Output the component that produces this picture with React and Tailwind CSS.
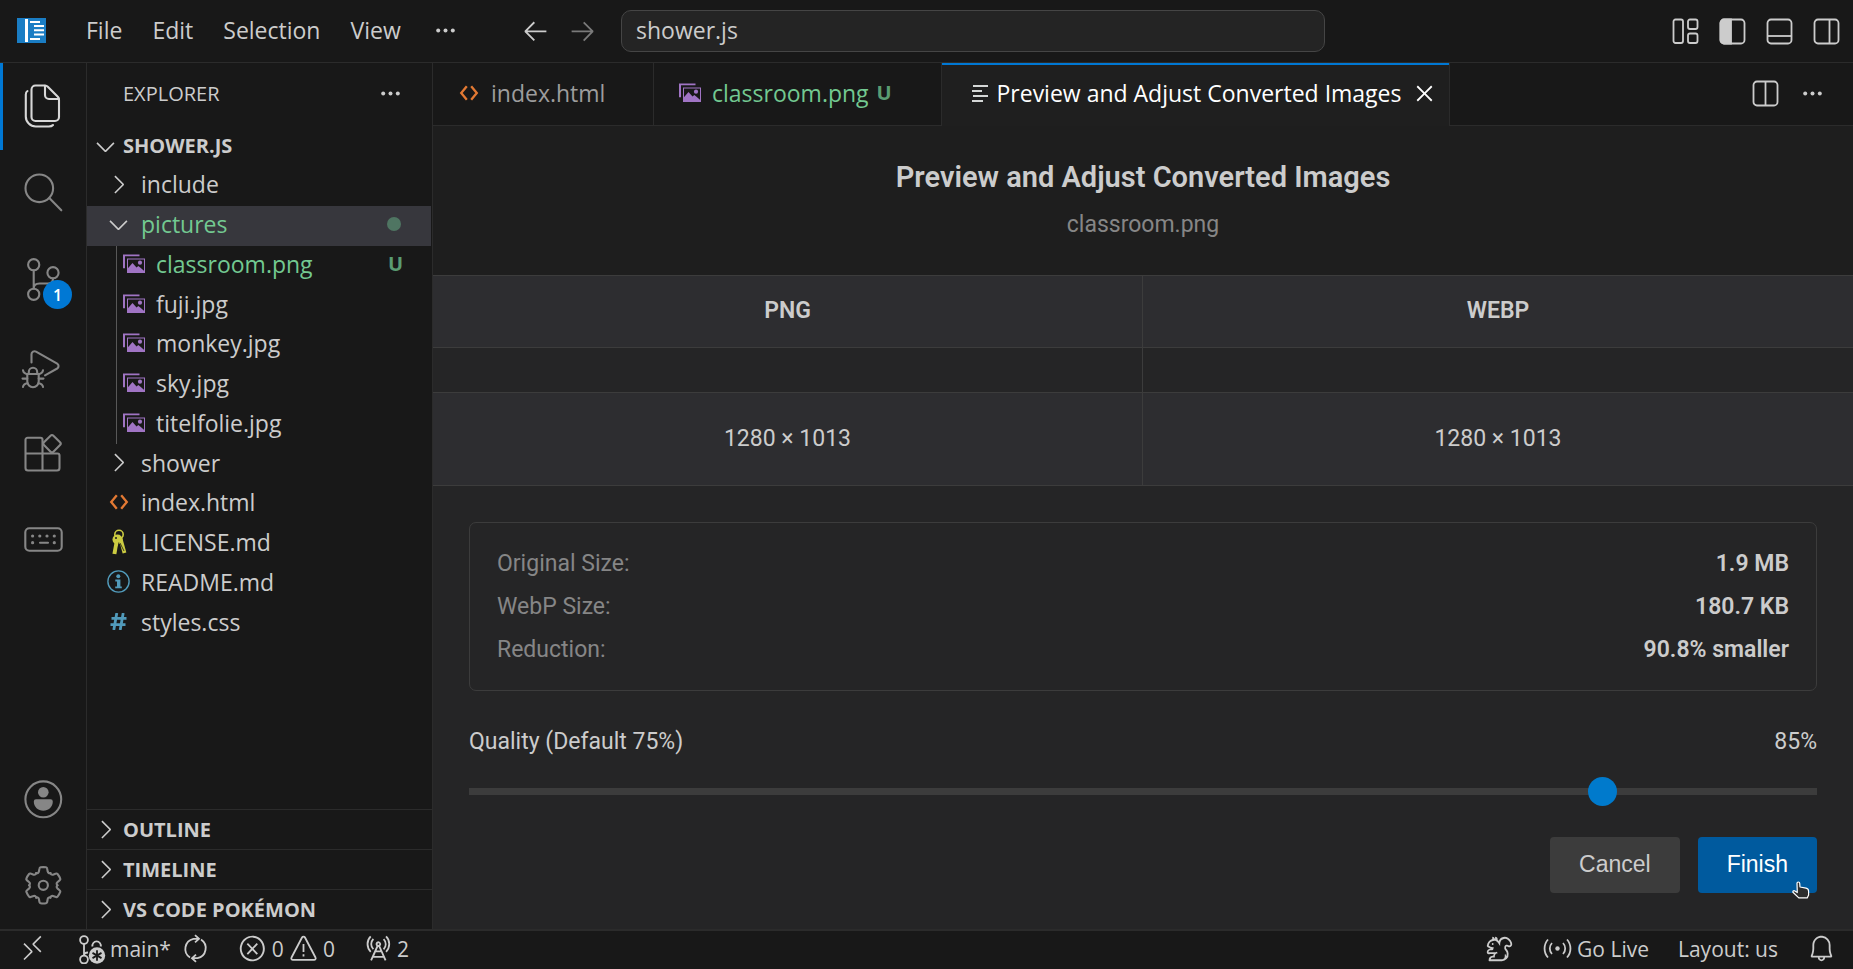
import React, { useState } from 'react';
import {
  VscArrowLeft,
  VscArrowRight,
  VscBell,
  VscChevronDown,
  VscChevronRight,
  VscClose,
  VscError,
  VscRadioTower,
  VscRemote,
  VscSquirrel,
} from 'react-icons/vsc';

/* ---------- Icons ---------- */

const ActivitySvg = ({ children }) => (
  <svg
    viewBox="0 0 44 45"
    className="w-[44px] h-[45px]"
    fill="none"
    stroke="currentColor"
    strokeWidth="2.1"
    strokeLinecap="round"
    strokeLinejoin="round"
  >
    {children}
  </svg>
);

const FilesIcon = () => (
  <ActivitySvg>
    <path d="M14.5 1.5H24a4 4 0 0 1 2.8 1.2l10 10A4 4 0 0 1 38 15.5V33a4 4 0 0 1-4 4H14.5a4 4 0 0 1-4-4V5.5a4 4 0 0 1 4-4Z" />
    <path d="M24 1.8V11a4 4 0 0 0 4 4h9.8" />
    <path d="M6.500 7C5.300 7.800 4.800 9 4.800 10.500v22a10 10 0 0 0 10 10h13c2 0 3.200-.4 4.200-1.500" />
  </ActivitySvg>
);

const SearchIcon = () => (
  <ActivitySvg>
    <circle cx="18.3" cy="17.3" r="13.8" />
    <path d="M28.3 27 40.3 39.3" />
  </ActivitySvg>
);

const SourceControlIcon = () => (
  <ActivitySvg>
    <circle cx="12.7" cy="6.7" r="5.6" />
    <circle cx="32" cy="14.7" r="5.6" />
    <circle cx="12.7" cy="36.3" r="5.6" />
    <path d="M12.7 12.5v18M32 20.5c0 3.5-1.8 5-5 5h-8.5c-3.8 0-5.8 2-5.8 5" />
  </ActivitySvg>
);

const DebugIcon = () => (
  <ActivitySvg>
    <path d="M10.5 17.5V9.3a3 3 0 0 1 4.5-2.6l21.2 12a2.8 2.8 0 0 1 0 4.800L24 30.300" />
    <path d="M6.3 29h11.4v7.5a5.7 5.7 0 0 1-11.4 0ZM7.8 29v-2a4.2 4.2 0 0 1 8.4 0v2" />
    <path d="M2 25.2c.3 2.2 1.6 3.6 4.3 4M22 25.2c-.3 2.2-1.6 3.6-4.3 4M1.5 33.6h4.8M17.7 33.6h4.8M2 42c.2-2 1.8-3.4 4.6-3.8M22 42c-.2-2-1.8-3.4-4.6-3.8" />
  </ActivitySvg>
);

const ExtensionsIcon = () => (
  <ActivitySvg>
    <path d="M21.5 21.5V7.8a2 2 0 0 0-2-2H6.5a2 2 0 0 0-2 2V36A2.5 2.5 0 0 0 7 38.5h29a2.5 2.5 0 0 0 2.5-2.5V23.5a2 2 0 0 0-2-2h-32M21.5 21.5v17" />
    <rect x="24.3" y="5" width="13.4" height="13.4" rx="2" transform="rotate(45 31 11.7)" />
  </ActivitySvg>
);

const KeyboardIcon = () => (
  <ActivitySvg>
    <rect x="4.3" y="9.3" width="36.4" height="22.4" rx="4" />
    <path d="M19 23.7h8" />
    <g fill="currentColor" stroke="none">
      <circle cx="11.6" cy="17" r="1.6" />
      <circle cx="18.8" cy="17" r="1.6" />
      <circle cx="26" cy="17" r="1.6" />
      <circle cx="33.3" cy="17" r="1.6" />
      <circle cx="11.6" cy="23.7" r="1.6" />
      <circle cx="33.3" cy="23.7" r="1.6" />
    </g>
  </ActivitySvg>
);

const AccountIcon = () => (
  <ActivitySvg>
    <circle cx="22.3" cy="23.3" r="17.9" />
    <g fill="currentColor" stroke="none">
      <circle cx="22.3" cy="16.3" r="5.3" />
      <path d="M15 23.3h14.6a2.2 2.2 0 0 1 2.2 2.2c0 5.5-4.3 9.3-9.5 9.3s-9.5-3.8-9.5-9.3a2.2 2.2 0 0 1 2.2-2.2Z" />
    </g>
  </ActivitySvg>
);

const GearIcon = () => (
  <ActivitySvg>
    <circle cx="22.3" cy="22.3" r="4.6" />
    {/* one tooth, repeated every 60 degrees */}
    {[0, 60, 120, 180, 240, 300].map((deg) => (
      <path
        key={deg}
        transform={`rotate(${deg} 22.3 22.3)`}
        d="M15.2 10c1.3.5 2.4-.1 2.700-1.400l.6-3.200c.1-.7.5-1 1.100-1.100 1.800-.3 3.600-.3 5.400 0 .6.1 1 .4 1.100 1.100l.6 3.200c.3 1.300 1.400 1.900 2.700 1.400"
      />
    ))}
  </ActivitySvg>
);

const CodeSvg = ({ children }) => (
  <svg viewBox="0 0 29 29" className="w-[29px] h-[29px] shrink-0" fill="none" stroke="currentColor" strokeWidth="1.8">
    {children}
  </svg>
);

const EllipsisIcon = () => (
  <CodeSvg>
    <g fill="currentColor" stroke="none">
      <circle cx="7.2" cy="14.5" r="2" />
      <circle cx="14.5" cy="14.5" r="2" />
      <circle cx="21.8" cy="14.5" r="2" />
    </g>
  </CodeSvg>
);

const CustomizeLayoutIcon = () => (
  <CodeSvg>
    <rect x="2.5" y="2.5" width="9.5" height="23.5" rx="2" />
    <rect x="17" y="2.5" width="9.5" height="9.5" rx="2" />
    <rect x="17" y="16.5" width="9.5" height="9.5" rx="2" />
  </CodeSvg>
);

const PanelIcon = ({ side }) => (
  <CodeSvg>
    <rect x="2.5" y="2.5" width="24" height="24" rx="3.5" />
    {side === 'left' && <path d="M6 2.5h7v24H6A3.5 3.5 0 0 1 2.5 23V6A3.5 3.5 0 0 1 6 2.5Z" fill="currentColor" />}
    {side === 'bottom' && <path d="M2.5 19h24" />}
    {side === 'right' && <path d="M17.5 2.5v24" />}
    {side === 'middle' && <path d="M14.5 2.5v24" />}
  </CodeSvg>
);

const HtmlIcon = () => (
  <svg viewBox="0 0 20 16" className="w-[20px] h-[16px] text-[#e37933]" fill="none" stroke="currentColor" strokeWidth="2.3">
    <path d="M7.8 1.2 2.2 8l5.6 6.8M12.2 1.2 17.8 8l-5.6 6.8" />
  </svg>
);

const ImageIcon = () => (
  <svg viewBox="0 0 22 20" className="w-[22px] h-[20px] shrink-0 text-[#a074c4]" fill="currentColor">
    <path d="M0 .5h16.5v1.7H2v12H0Z" />
    <path fillRule="evenodd" d="M4 4.5h18V19H4Zm1 1V18h16V5.500Z" />
    <circle cx="17" cy="8.7" r="2.1" />
    <path d="M4.5 18.5v-3.800l5-5.700 4 4.500 1.800-1.500 2.200 1.800 4 3.500v1.200Z" />
  </svg>
);

const KeysIcon = () => (
  <svg viewBox="0 0 16 27" className="w-[16px] h-[27px] text-[#cbcb41]" fill="none" stroke="currentColor">
    <circle cx="8" cy="5.5" r="4.2" strokeWidth="1.6" />
    <circle cx="6.5" cy="10.5" r="5" fill="currentColor" stroke="none" />
    <path d="M6 11 3.400 25" strokeWidth="4" />
    <path d="M9.500 9.500 13.500 24" strokeWidth="3.8" />
    <path d="M7.800 13.500 6.600 25M9 14l4 8" stroke="#181818" strokeWidth=".8" />
    <circle cx="5" cy="9" r="1" fill="#181818" stroke="none" />
  </svg>
);

const InfoIcon = () => (
  <svg viewBox="0 0 23 23" className="w-[23px] h-[23px] text-[#519aba]" fill="none" stroke="currentColor">
    <circle cx="11.5" cy="11.5" r="10.6" strokeWidth="1.4" />
    <circle cx="11.3" cy="6.3" r="2" fill="currentColor" stroke="none" />
    <path d="M8.3 10.500h4.200v6.800M8.200 17.300h6.600" strokeWidth="1.8" />
    <path d="M11.500 10v7.500" strokeWidth="3" />
  </svg>
);

const HashIcon = () => (
  <svg viewBox="0 0 17 17" className="w-[17px] h-[17px] text-[#519aba]" fill="none" stroke="currentColor" strokeWidth="2.8">
    <path d="M6.8 0 3.800 17M13.200 0l-3 17M1.500 5.300h15M.5 11.700h15" />
  </svg>
);

const LinesIcon = () => (
  <svg viewBox="0 0 16 18" className="w-[16px] h-[18px] shrink-0 text-[#d4d7d6]" stroke="currentColor" strokeWidth="2">
    <path d="M1 2h15M0 7h10M1 12h15M0 17h11" />
  </svg>
);

const BranchIcon = () => (
  <svg viewBox="0 0 28 30" className="w-[28px] h-[30px]" fill="none" stroke="currentColor" strokeWidth="1.8">
    <circle cx="6" cy="6" r="3.9" />
    <circle cx="6" cy="25.5" r="3.9" />
    <path d="M6 10v11.500M14.500 12.500a4.200 4.200 0 1 1 8.200 0M6 21.500c0-2 1.500-3 4-3" />
    <circle cx="19" cy="21.500" r="8.2" fill="currentColor" stroke="none" />
    <path d="M19 16.300v10.400M14.500 18.900l9 5.200M23.500 18.900l-9 5.200" stroke="#181818" />
  </svg>
);

const SyncIcon = () => (
  <CodeSvg>
    <path id="sync-half" d="M9 23.500A10.300 10.300 0 0 1 12.500 4.800H18M14 1.200l4 3.600-4 3.600" />
    <path d="M9 23.500A10.300 10.300 0 0 1 12.500 4.800H18M14 1.200l4 3.600-4 3.600" transform="rotate(180 14.500 14.500)" />
  </CodeSvg>
);

const WarningIcon = () => (
  <CodeSvg>
    <path d="M13 3.500a1.700 1.700 0 0 1 3 0l10.500 20a1.600 1.600 0 0 1-1.400 2.400H3.900a1.600 1.600 0 0 1-1.400-2.400Z" strokeLinejoin="round" />
    <path d="M14.500 10v8M14.500 20.300v2.200" />
  </CodeSvg>
);

const BroadcastIcon = () => (
  <CodeSvg>
    <circle cx="14.5" cy="14.5" r="2.2" fill="currentColor" stroke="none" />
    <path d="M9 9a8 8 0 0 0 0 11M20 9a8 8 0 0 1 0 11M5 5.500a13.500 13.500 0 0 0 0 18M24 5.500a13.500 13.500 0 0 1 0 18" />
  </CodeSvg>
);

const AppLogo = () => (
  <svg viewBox="0 0 29 25" className="w-[29px] h-[25px] shrink-0">
    <path fill="#1a7dc4" d="M0 0h29v25H0Z" />
    <path stroke="#fff" strokeWidth="3" d="M9.500 1v23" />
    <path stroke="#fff" strokeWidth="2" d="M13 4h10M17 8h10M17 12.300h10M17 16.500h10M13 21h10" />
  </svg>
);

const HandCursor = () => (
  <svg viewBox="0 0 18 18" className="absolute w-[18px] h-[18px] right-[7px] -bottom-[6px]">
    <path
      d="M5 2.200C5 .6 7.600.6 7.700 2.200L8 6l6 1.200c1.800.4 2.600 1.300 2.600 3V14l-1.400 2.900H6.800L1.200 11.500c-1-1 .5-2.400 1.700-1.600L5.300 11.500Z"
      fill="#2d2d2d"
      stroke="#fff"
      strokeWidth="1.2"
      strokeLinejoin="round"
    />
  </svg>
);

/* ---------- Data ---------- */

const TREE = [
  { name: 'include', kind: 'folder' },
  { name: 'pictures', kind: 'folder', open: true },
  { name: 'classroom.png', kind: 'image', badge: 'U' },
  { name: 'fuji.jpg', kind: 'image' },
  { name: 'monkey.jpg', kind: 'image' },
  { name: 'sky.jpg', kind: 'image' },
  { name: 'titelfolie.jpg', kind: 'image' },
  { name: 'shower', kind: 'folder' },
  { name: 'index.html', kind: 'file', icon: <HtmlIcon /> },
  { name: 'LICENSE.md', kind: 'file', icon: <KeysIcon /> },
  { name: 'README.md', kind: 'file', icon: <InfoIcon /> },
  { name: 'styles.css', kind: 'file', icon: <HashIcon /> },
];

const ACTIVITIES = [
  { label: 'Explorer', icon: <FilesIcon />, active: true },
  { label: 'Search', icon: <SearchIcon /> },
  { label: 'Source Control', icon: <SourceControlIcon />, badge: 1 },
  { label: 'Run and Debug', icon: <DebugIcon /> },
  { label: 'Extensions', icon: <ExtensionsIcon /> },
  { label: 'Keyboard', icon: <KeyboardIcon /> },
];

const STATS = [
  ['Original Size:', '1.9 MB'],
  ['WebP Size:', '180.7 KB'],
  ['Reduction:', '90.8% smaller'],
];

/* ---------- Layout parts ---------- */

const TitleBar = () => (
  <header className="h-[63px] shrink-0 flex items-center border-b border-[#2b2b2b]">
    <div className="w-[621px] shrink-0 flex items-center justify-between pl-[17px] pr-[24px] pb-[2px]">
      <div className="flex items-center">
        <AppLogo />
        <nav className="flex items-center gap-[30px] ml-[40px]">
          {['File', 'Edit', 'Selection', 'View'].map((m) => (
            <button key={m}>{m}</button>
          ))}
          <button aria-label="More"><EllipsisIcon /></button>
        </nav>
      </div>
      <div className="flex gap-[18px]">
        <button aria-label="Back"><VscArrowLeft size={29} /></button>
        <button aria-label="Forward" className="text-[#7a7a7a]"><VscArrowRight size={29} /></button>
      </div>
    </div>
    <input
      aria-label="Command Center"
      readOnly
      value="shower.js"
      className="w-[38%] h-[42px] rounded-[10px] border border-[#454545] bg-[#242424] px-[14px] pb-[2px] outline-none"
    />
    <div className="ml-auto flex gap-[18px] pr-3">
      <button aria-label="Customize Layout"><CustomizeLayoutIcon /></button>
      <button aria-label="Toggle Primary Side Bar"><PanelIcon side="left" /></button>
      <button aria-label="Toggle Panel"><PanelIcon side="bottom" /></button>
      <button aria-label="Toggle Secondary Side Bar"><PanelIcon side="right" /></button>
    </div>
  </header>
);

const ActivityButton = ({ label, icon, active, badge }) => (
  <button
    aria-label={label}
    className={`relative h-[87px] flex items-center justify-center ${active ? 'text-[#d7d7d7]' : 'text-[#868686]'}`}
  >
    {active && <span className="absolute left-0 inset-y-0 w-[3px] bg-[#0078d4]" />}
    {icon}
    {badge && (
      <span className="absolute right-[14px] bottom-[15px] w-[29px] h-[29px] rounded-full bg-[#0078d4] text-white text-base font-semibold flex items-center justify-center">
        {badge}
      </span>
    )}
  </button>
);

const ActivityBar = () => (
  <aside className="w-[87px] shrink-0 flex flex-col justify-between border-r border-[#2b2b2b]">
    <div className="flex flex-col">
      {ACTIVITIES.map((a) => <ActivityButton key={a.label} {...a} />)}
    </div>
    <div className="flex flex-col">
      <ActivityButton label="Accounts" icon={<AccountIcon />} />
      <ActivityButton label="Manage" icon={<GearIcon />} />
    </div>
  </aside>
);

const TreeRow = ({ name, kind, open, icon, badge }) => {
  if (kind === 'image') {
    return (
      <li className="ml-[29px] pl-[6px] pr-[29px] pb-[3px] border-l border-[#585858] flex items-center">
        <ImageIcon />
        <span className={`ml-[11px] ${badge ? 'text-[#73c991]' : ''}`}>{name}</span>
        {badge && <span className="ml-auto text-xl font-bold text-[#5a9c72]">{badge}</span>}
      </li>
    );
  }
  return (
    <li className={`pl-[17px] pr-[30px] pb-[3px] mr-px flex items-center ${open ? 'bg-[#37373d] text-[#73c991]' : ''}`}>
      <span className="w-[29px] flex justify-center text-[#cccccc]">
        {kind === 'folder' ? (open ? <VscChevronDown size={29} /> : <VscChevronRight size={29} />) : icon}
      </span>
      <span className="ml-[8px]">{name}</span>
      {open && <span className="ml-auto w-[14px] h-[14px] rounded-full bg-[#4f7562]" />}
    </li>
  );
};

const Sidebar = () => (
  <aside className="w-[346px] shrink-0 flex flex-col border-r border-[#2b2b2b]">
    <div className="h-[63px] flex items-center justify-between pl-[36px] pr-[27px] pb-[2px]">
      <h2 className="text-xl">EXPLORER</h2>
      <button aria-label="Views and More Actions"><EllipsisIcon /></button>
    </div>
    <div className="h-[40px] flex items-center pl-[4px]">
      <VscChevronDown size={29} />
      <h3 className="ml-[3px] text-xl font-bold">SHOWER.JS</h3>
    </div>
    <ul className="h-[477px] grid auto-rows-fr">
      {TREE.map((item) => <TreeRow key={item.name} {...item} />)}
    </ul>
    <div className="mt-auto">
      {['OUTLINE', 'TIMELINE', 'VS CODE POKÉMON'].map((s) => (
        <button key={s} className="w-full h-[40px] flex items-center pl-[4px] border-t border-[#2b2b2b] text-xl font-bold">
          <VscChevronRight size={29} />
          <span className="ml-[3px]">{s}</span>
        </button>
      ))}
    </div>
  </aside>
);

const Tabs = () => (
  <div className="h-[63px] flex shrink-0 bg-[#181818]">
    <div className="w-[221px] flex items-center pl-[26px] pb-[2px] border-r border-b border-[#2b2b2b] text-[#9d9d9d]">
      <HtmlIcon />
      <span className="ml-[12px]">index.html</span>
    </div>
    <div className="w-[288px] flex items-center pl-[25px] pb-[2px] border-r border-b border-[#2b2b2b] text-[#73c991]">
      <ImageIcon />
      <span className="ml-[11px]">classroom.png</span>
      <span className="ml-[8px] text-xl font-bold text-[#5a9c72]">U</span>
    </div>
    <div className="relative w-[508px] flex items-center justify-between pl-[30px] pr-[10px] pb-[3px] border-r border-[#2b2b2b] bg-[#1f1f1f] text-white">
      <span className="absolute top-0 inset-x-0 h-[2px] bg-[#0078d4]" />
      <LinesIcon />
      <span className="whitespace-nowrap">Preview and Adjust Converted Images</span>
      <button aria-label="Close"><VscClose size={29} /></button>
    </div>
    <div className="flex-1 flex items-center justify-end gap-[18px] pr-[26px] pb-[2px] border-b border-[#2b2b2b]">
      <button aria-label="Split Editor"><PanelIcon side="middle" /></button>
      <button aria-label="More Actions"><EllipsisIcon /></button>
    </div>
  </div>
);

const Preview = () => {
  const [quality, setQuality] = useState(85);

  return (
    <section className="flex-1 flex flex-col bg-[#252526] font-['Roboto',sans-serif] leading-[43px]">
      <div className="h-[150px] shrink-0 flex flex-col items-center pt-[30px] bg-[#1e1e1e] border-b border-[#3c3c3c]">
        <h1 className="text-[29px] font-semibold">Preview and Adjust Converted Images</h1>
        <p className="mt-[4px] text-[#868686]">classroom.png</p>
      </div>

      <table className="w-full table-fixed border-separate border-spacing-0 text-center">
        <thead>
          <tr>
            <th className="h-[72px] p-0 pb-[2px] bg-[#2d2d30] border-b border-r border-[#3c3c3c] font-semibold">PNG</th>
            <th className="h-[72px] p-0 pb-[2px] bg-[#2d2d30] border-b border-[#3c3c3c] font-semibold">WEBP</th>
          </tr>
        </thead>
        <tbody>
          <tr>
            <td className="h-[45px] p-0 border-b border-r border-[#3c3c3c]"></td>
            <td className="h-[45px] p-0 border-b border-[#3c3c3c]"></td>
          </tr>
          <tr>
            <td className="h-[93px] p-0 pb-[2px] bg-[#2d2d30] border-b border-r border-[#3c3c3c]">1280 × 1013</td>
            <td className="h-[93px] p-0 pb-[2px] bg-[#2d2d30] border-b border-[#3c3c3c]">1280 × 1013</td>
          </tr>
        </tbody>
      </table>

      <div className="p-[36px] flex flex-col">
        <dl className="border border-[#3c3c3c] rounded-[7px] px-[27px] py-[19px]">
          {STATS.map(([label, value]) => (
            <div key={label} className="flex justify-between">
              <dt className="text-[#868686]">{label}</dt>
              <dd className="font-semibold">{value}</dd>
            </div>
          ))}
        </dl>

        <div className="mt-[29px] flex justify-between">
          <label htmlFor="quality">Quality (Default 75%)</label>
          <output htmlFor="quality">{quality}%</output>
        </div>
        <input
          id="quality"
          type="range"
          min="1"
          max="100"
          value={quality}
          onChange={(e) => setQuality(Number(e.target.value))}
          className="mt-[14px] w-full h-[29px] appearance-none bg-transparent cursor-pointer [&::-webkit-slider-runnable-track]:h-[7px] [&::-webkit-slider-runnable-track]:bg-[#3c3c3c] [&::-webkit-slider-thumb]:appearance-none [&::-webkit-slider-thumb]:w-[29px] [&::-webkit-slider-thumb]:h-[29px] [&::-webkit-slider-thumb]:-mt-[11px] [&::-webkit-slider-thumb]:rounded-full [&::-webkit-slider-thumb]:bg-[#007acc]"
        />

        <div className="mt-[31px] flex justify-end gap-[18px] font-['Liberation_Sans',sans-serif]">
          <button className="h-[56px] px-[29px] pb-[2px] rounded-[4px] bg-[#3c3c3c]">Cancel</button>
          <button className="relative h-[56px] px-[29px] pb-[2px] rounded-[4px] bg-[#005a9e] text-white">
            Finish
            <HandCursor />
          </button>
        </div>
      </div>
    </section>
  );
};

const StatusBar = () => (
  <footer className="h-[40px] shrink-0 flex items-center justify-between border-t-2 border-[#2b2b2b] pl-[18px] pr-[17px] pb-[3px] text-[21px]">
    <div className="flex items-center">
      <button aria-label="Remote"><VscRemote size={29} /></button>
      <button className="flex items-center ml-[31px]">
        <BranchIcon />
        <span className="ml-[4px]">main*</span>
      </button>
      <button aria-label="Synchronize" className="ml-[10px]"><SyncIcon /></button>
      <button className="flex items-center ml-[28px] gap-[5px]">
        <VscError size={29} />0
        <WarningIcon />0
      </button>
      <button className="flex items-center ml-[28px] gap-[5px]">
        <VscRadioTower size={29} />2
      </button>
    </div>
    <div className="flex items-center gap-[29px]">
      <button aria-label="Squirrel"><VscSquirrel size={29} /></button>
      <button className="flex items-center gap-[5px]"><BroadcastIcon />Go Live</button>
      <button>Layout: us</button>
      <button aria-label="Notifications"><VscBell size={29} /></button>
    </div>
  </footer>
);

export default function App() {
  return (
    <div className="h-screen flex flex-col overflow-hidden bg-[#181818] text-[#cccccc] text-[23px] leading-[30px] font-['Open_Sans',sans-serif]">
      <TitleBar />
      <div className="flex-1 min-h-0 flex">
        <ActivityBar />
        <Sidebar />
        <main className="flex-1 min-w-0 flex flex-col">
          <Tabs />
          <Preview />
        </main>
      </div>
      <StatusBar />
    </div>
  );
}
